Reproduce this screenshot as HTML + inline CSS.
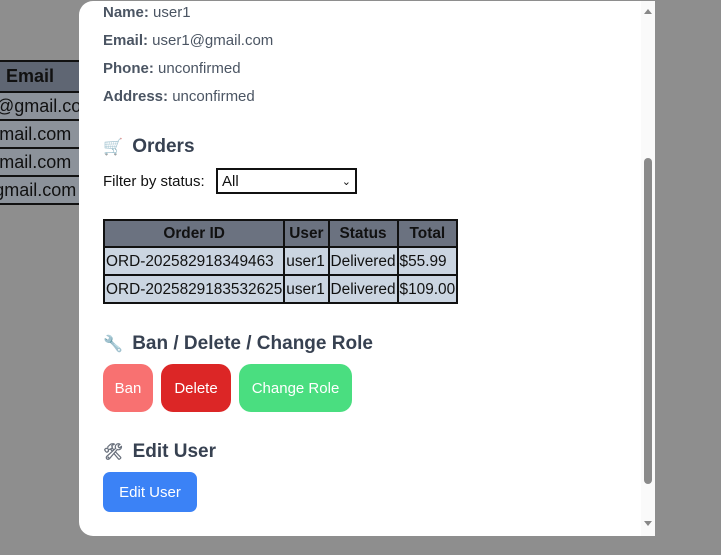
<!DOCTYPE html>
<html><head><style>
body{margin:0;width:721px;height:555px;overflow:hidden;background:#8e8e8e;font-family:"Liberation Sans",sans-serif;position:relative}
.bg{position:absolute;left:-40px;top:60px;border-collapse:collapse;font-size:18px;color:#111}
.bg td{border:2px solid #111;height:26px;padding:0 0 0 4px;background:#8c929a;width:120px;white-space:nowrap;overflow:hidden}
.bg th{border:2px solid #111;height:27px;background:#5f6673;text-align:left;padding-left:44px;font-weight:bold}
.modal{position:absolute;left:79px;top:1px;width:576px;height:535px;background:#fff;border-radius:14px 0 0 14px;overflow:hidden;color:#374151}
.sb{position:absolute;left:562px;top:0;width:14px;height:535px;background:#fafafa}
.thumb{position:absolute;left:3px;top:157px;width:8px;height:326px;background:#8a8a8a;border-radius:4px}
p{margin:0;position:absolute;left:24px;font-size:15px;color:#4b5563}
p b{color:#4b5563}
h3{margin:0;position:absolute;left:24px;font-size:19px;font-weight:bold;color:#374151}
h3 span{font-size:16px;margin-right:4px;opacity:.75}
.tbl{position:absolute;left:24px;top:218px;border-collapse:collapse;font-size:15.4px;color:#111}
.tbl th{background:#6b7280;border:2px solid #111;height:25px;padding:0 4px}
.tbl td{background:#cbd5e1;border:2px solid #111;height:25px;padding:1px 1px 0}
.btn{position:absolute;top:363px;height:48px;border-radius:12px;color:#fff;font-size:15px;line-height:50px;text-align:center}
</style></head><body>
<table class="bg"><tr><th>Email</th></tr><tr><td>&nbsp;&nbsp;25@gmail.com</td></tr><tr><td>&nbsp;@gmail.com</td></tr><tr><td>&nbsp;@gmail.com</td></tr><tr><td>h@gmail.com</td></tr></table>
<div class="modal">
<p style="top:3px"><b>Name:</b> user1</p>
<p style="top:31px"><b>Email:</b> user1@gmail.com</p>
<p style="top:59px"><b>Phone:</b> unconfirmed</p>
<p style="top:87px"><b>Address:</b> unconfirmed</p>
<h3 style="top:135px"><span>🛒</span> Orders</h3>
<p style="top:172px;color:#111">Filter by status:</p>
<div style="position:absolute;left:137px;top:167px;width:133px;height:22px;border:2px solid #111;font-size:15px;color:#111;line-height:24px;padding-left:4px;box-sizing:content-box">All<span style="position:absolute;right:4px;top:0;font-size:11px">&#8964;</span></div>
<table class="tbl"><tr><th>Order ID</th><th>User</th><th>Status</th><th>Total</th></tr>
<tr><td>ORD-202582918349463</td><td>user1</td><td>Delivered</td><td>$55.99</td></tr>
<tr><td>ORD-2025829183532625</td><td>user1</td><td>Delivered</td><td>$109.00</td></tr></table>
<h3 style="top:332px"><span>🔧</span> Ban / Delete / Change Role</h3>
<div class="btn" style="left:24px;width:50px;background:#f87171">Ban</div>
<div class="btn" style="left:82px;width:70px;background:#dc2626">Delete</div>
<div class="btn" style="left:160px;width:113px;background:#4ade80">Change Role</div>
<h3 style="top:440px"><span>🛠</span> Edit User</h3>
<div class="btn" style="top:471px;height:40px;line-height:42px;border-radius:7px;left:24px;width:94px;background:#3b82f6">Edit User</div>
<div class="sb"><div style="position:absolute;left:3px;top:8px;border:4px solid transparent;border-bottom:5px solid #888;border-top:0"></div><div class="thumb"></div><div style="position:absolute;left:3px;top:520px;border:4px solid transparent;border-top:5px solid #888;border-bottom:0"></div></div>
</div>
</body></html>
